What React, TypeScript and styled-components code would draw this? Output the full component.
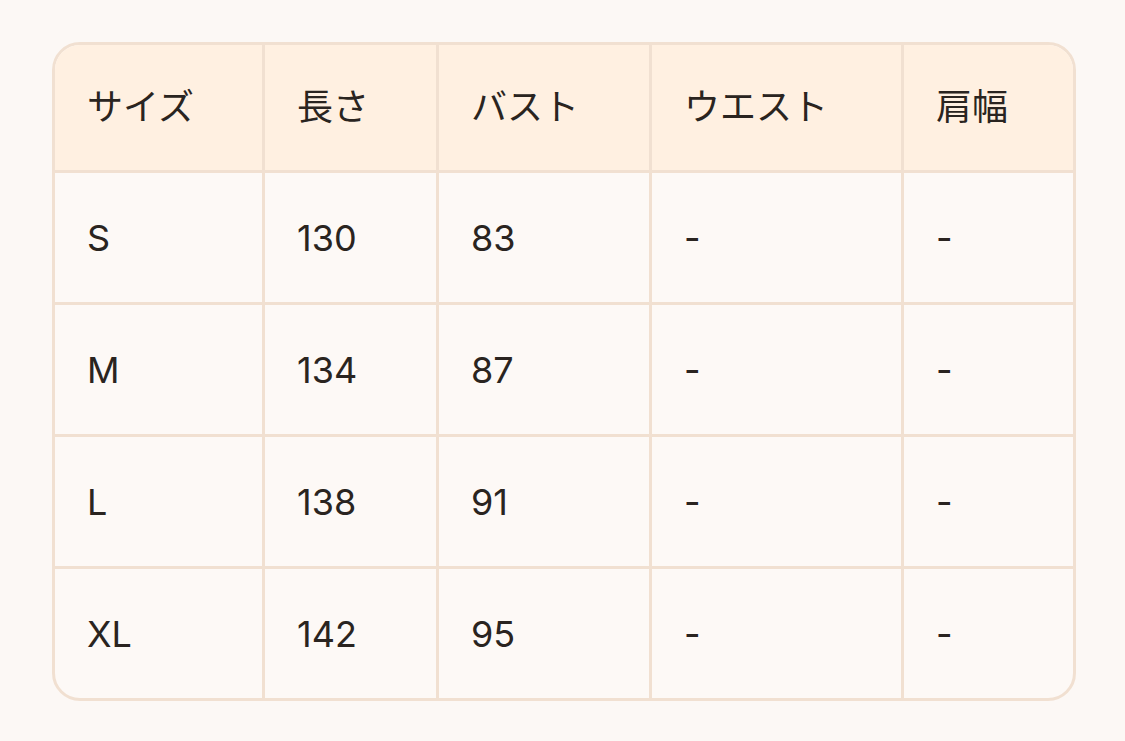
import styled, { createGlobalStyle } from "styled-components";

const GlobalStyle = createGlobalStyle`
body {
  margin:0;
  background:#fcf8f5;
  font-family:"Inter", "Noto Sans CJK JP", sans-serif;
}
`

const Page = styled.div`
padding:42px 49px 41px 52px;
`

const TableWrap = styled.div`
width:1024px;
border:3px solid #f1e0d1;
border-radius:28px;
overflow:hidden;
box-sizing:border-box;
background:#fdf9f6;
`

const Table = styled.table`
width:100%;
border-collapse:separate;
border-spacing:0;
table-layout:fixed;
`

const HeadCell = styled.th`
height:128px;
padding:0 0 8px 32px;
box-sizing:border-box;
text-align:left;
font-weight:400;
font-size:36px;
color:#2a2420;
background:#fff0e1;
border-right:3px solid #f1e0d1;
border-bottom:3px solid #f1e0d1;
&:last-child { border-right:none; }
`

const Cell = styled.td<{ $last?: boolean }>`
height:${props => props.$last ? "129px" : "132px"};
padding:0 0 0 32px;
box-sizing:border-box;
font-size:36px;
color:#2a2420;
border-right:3px solid #f1e0d1;
border-bottom:${props => props.$last ? "none" : "3px solid #f1e0d1"};
&:last-child { border-right:none; }
`

const widths = [210, 174, 213, 252, 169];
const headers = ["サイズ", "長さ", "バスト", "ウエスト", "肩幅"];
const rows = [
    ["S", "130", "83", "-", "-"],
    ["M", "134", "87", "-", "-"],
    ["L", "138", "91", "-", "-"],
    ["XL", "142", "95", "-", "-"],
];

export default function App() {
    return (
        <>
            <GlobalStyle />
            <Page>
                <TableWrap>
                    <Table>
                        <colgroup>
                            {widths.map((w, i) => <col key={i} style={{ width: w }} />)}
                        </colgroup>
                        <thead>
                            <tr>
                                {headers.map(h => <HeadCell key={h}>{h}</HeadCell>)}
                            </tr>
                        </thead>
                        <tbody>
                            {rows.map((r, i) => (
                                <tr key={r[0]}>
                                    {r.map((c, j) => <Cell key={j} $last={i === rows.length - 1}>{c}</Cell>)}
                                </tr>
                            ))}
                        </tbody>
                    </Table>
                </TableWrap>
            </Page>
        </>
    );
}
